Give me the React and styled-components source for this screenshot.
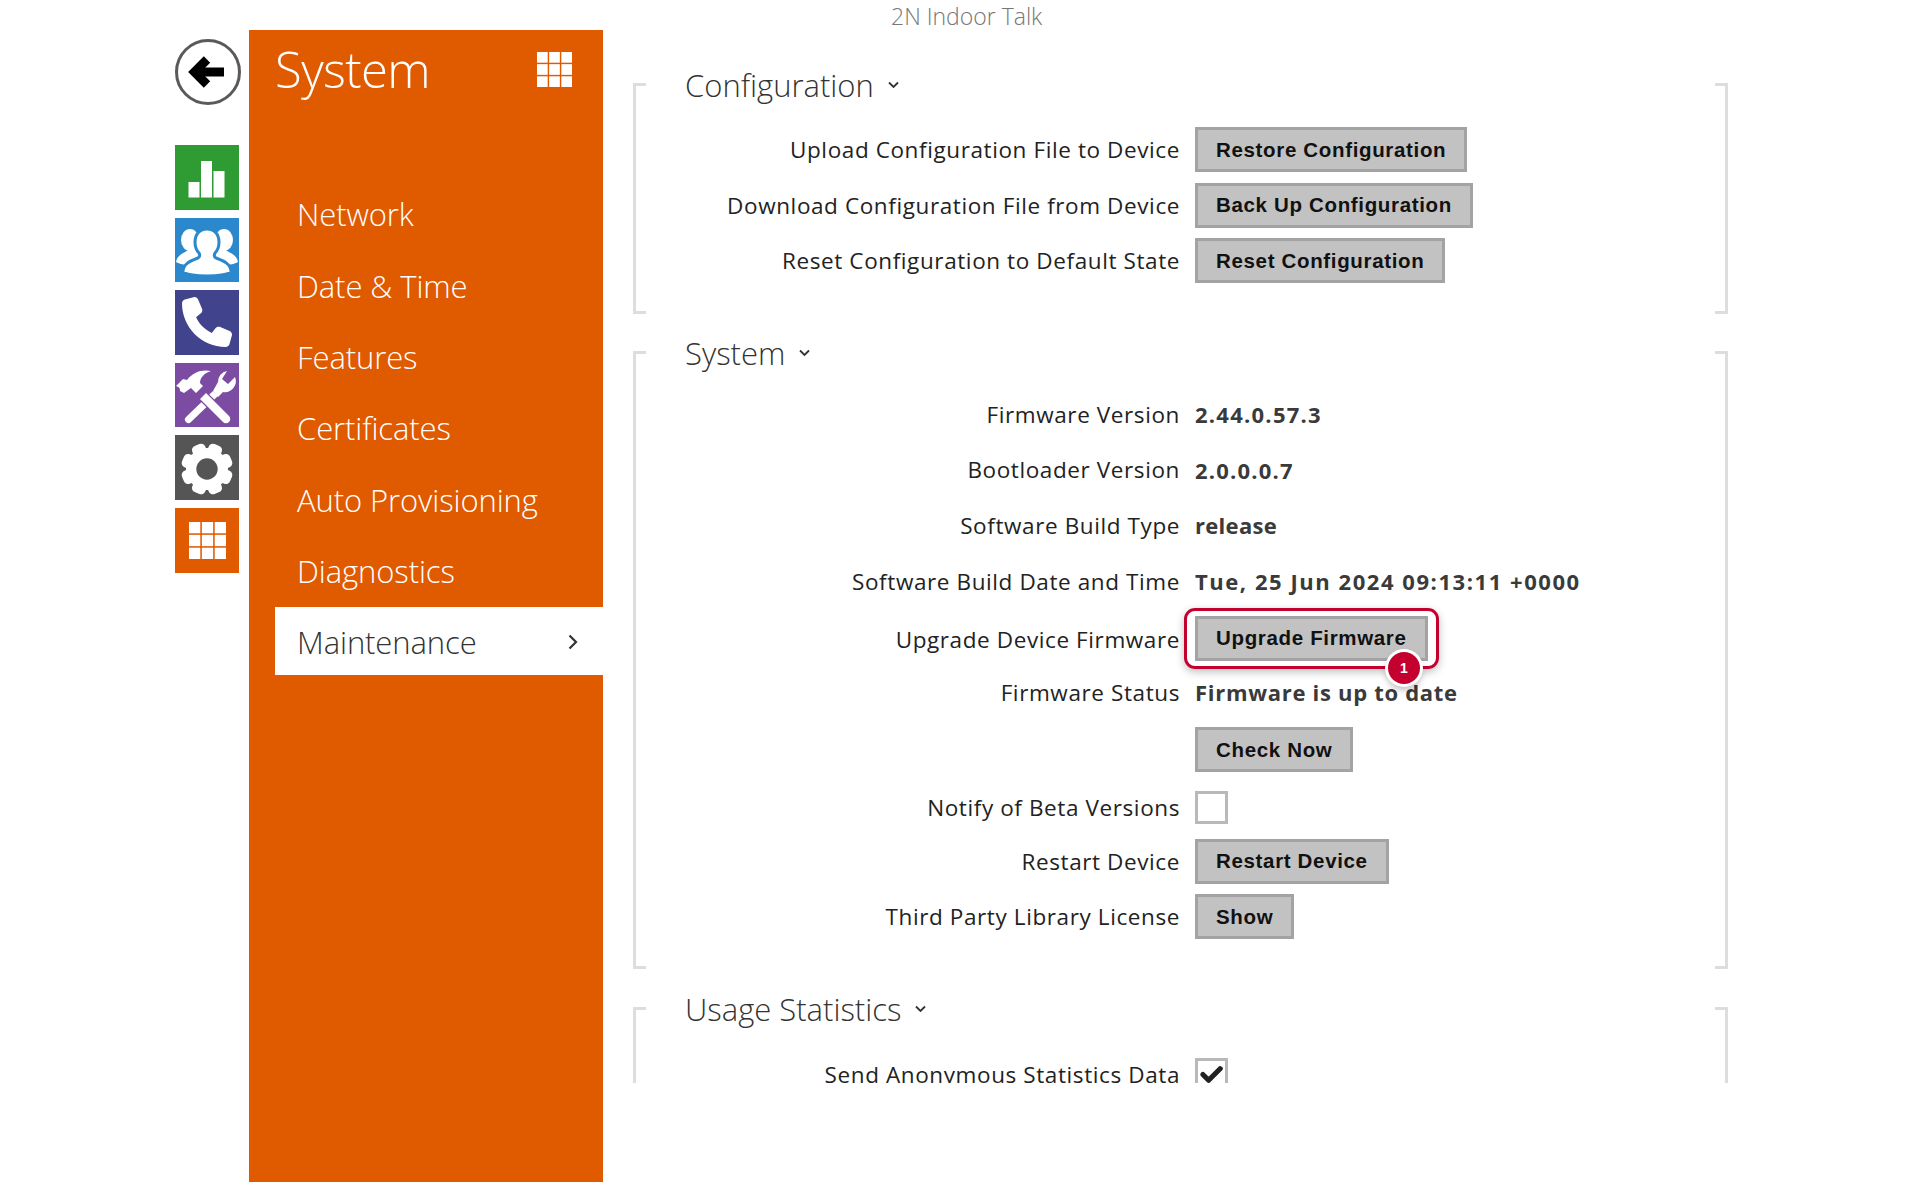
import React from 'react';
import styled, { createGlobalStyle } from 'styled-components';
import { FaPhone, FaCheck } from 'react-icons/fa6';

const GlobalStyle = createGlobalStyle`
  html, body {
    margin: 0;
    padding: 0;
    background: #ffffff;
    font-family: "Open Sans", "Liberation Sans", sans-serif;
  }
`

const Page = styled.div`
  display: flex;
  align-items: flex-start;
  width: 1920px;
  height: 1200px;
  padding-left: 175px;
  box-sizing: border-box;
  overflow: hidden;
`
const Rail = styled.div`
  display: flex;
  flex-direction: column;
  width: 74px;
  flex: none;
  padding-top: 39px;
`
const BackButton = styled.div`
  width: 66px;
  height: 66px;
  box-sizing: border-box;
  border: 3px solid #5a5a5a;
  border-radius: 50%;
  margin-bottom: 40px;
  display: flex;
  align-items: center;
  justify-content: center;
`
const TileList = styled.div`
  display: flex;
  flex-direction: column;
  gap: 8px;
`
const Tile = styled.div`
  width: 64px;
  height: 64.6px;
  background-color: ${props => props.$color};
  display: flex;
  align-items: center;
  justify-content: center;
  color: #ffffff;
`
const Panel = styled.div`
  width: 354px;
  height: 1152px;
  margin-top: 30px;
  flex: none;
  background-color: #e05a00;
  color: #ffffff;
`
const PanelHeader = styled.div`
  display: flex;
  align-items: center;
  justify-content: space-between;
  height: 79px;
  padding: 0 31px 0 26px;
  margin-bottom: 70.4px;
`
const PanelTitle = styled.div`
  font-size: 49px;
  font-weight: 300;
  letter-spacing: -0.6px;
  line-height: 79px;
`
const NavList = styled.div`
  display: flex;
  flex-direction: column;
  gap: 3.3px;
  margin-left: 26px;
`
const NavItem = styled.div`
  display: flex;
  align-items: center;
  justify-content: space-between;
  height: 68px;
  box-sizing: border-box;
  padding: 2px 25px 0 22px;
  font-size: 31px;
  font-weight: 300;
  letter-spacing: -0.1px;
  background-color: ${props => (props.$active ? '#ffffff' : 'transparent')};
  color: ${props => (props.$active ? '#333333' : '#ffffff')};
`
const Main = styled.div`
  flex: none;
  width: 1125px;
  padding-left: 30px;
  box-sizing: border-box;
`
const DeviceName = styled.div`
  height: 34px;
  line-height: 32px;
  padding-left: 258px;
  font-size: 23px;
  font-weight: 300;
  color: #777777;
`
const ScrollArea = styled.div`
  height: 1049px;
  overflow: hidden;
  padding-top: 29px;
  box-sizing: border-box;
`
const Section = styled.section`
  position: relative;
  display: flow-root;
  width: 1095px;
  height: ${props => props.$height}px;
  margin-bottom: ${props => props.$gap}px;
  padding-left: 52px;
  box-sizing: border-box;

  &::before, &::after {
    content: "";
    position: absolute;
    top: 20px;
    bottom: 0;
    width: 10px;
    border: 3px solid #dddddd;
  }
  &::before {
    left: 0;
    border-right: none;
  }
  &::after {
    right: 0;
    border-left: none;
  }
`
const SectionHeading = styled.h2`
  display: flex;
  align-items: center;
  gap: 14px;
  height: 46px;
  margin: -1px 0 ${props => props.$below + 1}px 0;
  font-size: 31px;
  font-weight: 300;
  color: #333333;
`
const Rows = styled.div`
  display: flex;
  flex-direction: column;
  gap: 10.7px;
  margin-left: -52px;
`
const Row = styled.div`
  display: grid;
  grid-template-columns: 547px 1fr;
  column-gap: 15px;
  align-items: center;
  height: 45px;
  box-sizing: border-box;
  padding-bottom: ${props => props.$up || 0}px;
  padding-top: ${props => props.$down || 0}px;
`
const Label = styled.div`
  text-align: right;
  font-size: 22.5px;
  letter-spacing: 0.6px;
  color: #222222;
  padding-top: ${props => props.$down || 0}px;
`
const Value = styled.div`
  font-size: 22px;
  font-weight: 700;
  letter-spacing: ${props => props.$spacing}px;
  color: #3a3a3a;
`
const Button = styled.button`
  display: block;
  justify-self: start;
  height: 45px;
  padding: 0 18px;
  box-sizing: border-box;
  border: 3px solid #a3a3a3;
  border-radius: 0;
  background-color: #c2c2c2;
  font-family: "Liberation Sans", Arial, sans-serif;
  font-size: 20.5px;
  font-weight: 700;
  letter-spacing: 0.66px;
  color: #111111;
`
const Callout = styled.div`
  position: relative;
  width: max-content;

  &::after {
    content: "";
    position: absolute;
    top: -8px;
    bottom: -8px;
    left: -11px;
    right: -11px;
    border: 3px solid #c4002f;
    border-radius: 11px;
    box-shadow: 0 3px 8px rgba(0,0,0,.25);
    pointer-events: none;
  }
`
const Badge = styled.div`
  position: absolute;
  z-index: 1;
  left: 193px;
  top: 36px;
  width: 32px;
  height: 32px;
  border-radius: 50%;
  background-color: #c4002f;
  box-shadow: 0 0 0 3px #ffffff, 0 4px 6px 2px rgba(0,0,0,.25);
  color: #ffffff;
  font-family: "Liberation Sans", Arial, sans-serif;
  font-size: 14px;
  font-weight: 700;
  line-height: 32px;
  text-align: center;
`
const CheckBox = styled.div`
  width: 33px;
  height: 33px;
  box-sizing: border-box;
  border: 3px solid #b9b9b9;
  background: #ffffff;
  display: flex;
  align-items: center;
  justify-content: center;
  color: #222222;
  font-size: 23px;
`

const ChevronDown = () => (
  <svg width="11" height="8" viewBox="0 0 11 8" fill="none" stroke="#333333" strokeWidth="1.8">
    <path d="M1 1.5l4.5 4.5 4.5-4.5" />
  </svg>
)
const ChevronRight = () => (
  <svg width="10" height="16" viewBox="0 0 10 16" fill="none" stroke="#333333" strokeWidth="2.2">
    <path d="M1.5 1.5l6.5 6.5-6.5 6.5" />
  </svg>
)
const BackArrow = () => (
  <svg width="60" height="60" viewBox="3 3 60 60" fill="none" stroke="#000000" strokeWidth="9">
    <path d="M32 20.5L19.5 33 32 45.5" />
    <path d="M22 33h27" />
  </svg>
)
const GridIcon = ({ size }) => (
  <svg width={size} height={size} viewBox="0 0 36 36" fill="#ffffff">
    {[0, 12.5, 25].map(y => [0, 12.5, 25].map(x => (
      <rect key={`${x}-${y}`} x={x} y={y} width="11" height="11" />
    )))}
  </svg>
)
const BarsIcon = () => (
  <svg width="64" height="64" viewBox="0 0 64 64" fill="#ffffff">
    <rect x="13.5" y="37" width="11" height="15.5" />
    <rect x="26" y="16" width="11" height="36.5" />
    <rect x="38.5" y="26" width="11" height="26.5" />
  </svg>
)
const UsersIcon = () => (
  <svg width="64" height="64" viewBox="0 0 64 64" fill="#ffffff" stroke="#2b88cc" strokeWidth="3">
    <ellipse cx="15" cy="22" rx="9" ry="11" stroke="none" />
    <ellipse cx="49" cy="22" rx="9" ry="11" stroke="none" />
    <path d="M1 44c1-7 8-9 14-13h34c6 4 13 6 14 13-5 3-15 4-31 4S6 47 1 44z" stroke="none" />
    <path d="M8 54c0-8 7-11 15-14 2-1 2-3 1-5-3-3-4-7-4-11 0-8 5-13 12-13s12 5 12 13c0 4-1 8-4 11-1 2-1 4 1 5 8 3 15 6 15 14-5 3-14 4-24 4S13 57 8 54z" />
  </svg>
)
const ToolsIcon = () => (
  <svg width="64" height="64" viewBox="0 0 64 64" fill="#ffffff">
    <path d="M11 54l27-26 5 5-27 26a3.5 3.5 0 0 1-5-5z" />
    <path d="M38 28l5-9a11 11 0 0 1 9-11l-5 8 6 5 7-7a11 11 0 0 1-12 15l-5 5z" />
    <path d="M25 36l6-6 23 23a4 4 0 0 1-6 6z" stroke="#7b4ca2" strokeWidth="2.5" paintOrder="stroke" />
    <path d="M1 23l7-7 4 1C18 9 27 6 36 8c-7 2-11 7-11 12l3 3-7 7-5-5-7 5-4-2c0-2 0-4-4-5z" />
  </svg>
)
const GearIcon = () => (
  <svg width="64" height="64" viewBox="0 0 64 64">
    {[0, 45, 90, 135, 180, 225, 270, 315].map(a => (
      <rect key={a} x="25" y="7" width="14" height="14" rx="4.5" fill="#ffffff" transform={`rotate(${a + 22.5} 32 33)`} />
    ))}
    <circle cx="32" cy="33" r="21" fill="#ffffff" />
    <circle cx="32" cy="33" r="10.7" fill="#555555" />
  </svg>
)

const navItems = ['Network', 'Date & Time', 'Features', 'Certificates', 'Auto Provisioning', 'Diagnostics', 'Maintenance']

const App = () => (
  <Page>
    <GlobalStyle />
    <Rail>
      <BackButton><BackArrow /></BackButton>
      <TileList>
        <Tile $color="#2f9b33"><BarsIcon /></Tile>
        <Tile $color="#2b88cc"><UsersIcon /></Tile>
        <Tile $color="#41438c"><FaPhone size={50} /></Tile>
        <Tile $color="#7b4ca2"><ToolsIcon /></Tile>
        <Tile $color="#555555"><GearIcon /></Tile>
        <Tile $color="#e05a00"><GridIcon size={37} /></Tile>
      </TileList>
    </Rail>
    <Panel>
      <PanelHeader>
        <PanelTitle>System</PanelTitle>
        <GridIcon size={35} />
      </PanelHeader>
      <NavList>
        {navItems.map(item => (
          <NavItem key={item} $active={item === 'Maintenance'}>
            {item}
            {item === 'Maintenance' && <ChevronRight />}
          </NavItem>
        ))}
      </NavList>
    </Panel>
    <Main>
      <DeviceName>2N Indoor Talk</DeviceName>
      <ScrollArea>
        <Section $height={251} $gap={17}>
          <SectionHeading $below={18}>Configuration <ChevronDown /></SectionHeading>
          <Rows>
            <Row><Label>Upload Configuration File to Device</Label><Button>Restore Configuration</Button></Row>
            <Row><Label>Download Configuration File from Device</Label><Button>Back Up Configuration</Button></Row>
            <Row><Label>Reset Configuration to Default State</Label><Button>Reset Configuration</Button></Row>
          </Rows>
        </Section>
        <Section $height={638} $gap={18}>
          <SectionHeading $below={16}>System <ChevronDown /></SectionHeading>
          <Rows>
            <Row $up={3}><Label>Firmware Version</Label><Value $spacing={1.25}>2.44.0.57.3</Value></Row>
            <Row $up={3}><Label>Bootloader Version</Label><Value $spacing={1.2}>2.0.0.0.7</Value></Row>
            <Row $up={3}><Label>Software Build Type</Label><Value $spacing={0.3}>release</Value></Row>
            <Row $up={3}><Label>Software Build Date and Time</Label><Value $spacing={1.55}>Tue, 25 Jun 2024 09:13:11 +0000</Value></Row>
            <Row>
              <Label $down={2}>Upgrade Device Firmware</Label>
              <Callout>
                <Button>Upgrade Firmware</Button>
                <Badge>1</Badge>
              </Callout>
            </Row>
            <Row $up={3}><Label>Firmware Status</Label><Value $spacing={0.7}>Firmware is up to date</Value></Row>
            <Row><span /><Button>Check Now</Button></Row>
            <Row $down={5}><Label>Notify of Beta Versions</Label><CheckBox /></Row>
            <Row><Label>Restart Device</Label><Button>Restart Device</Button></Row>
            <Row><Label>Third Party Library License</Label><Button>Show</Button></Row>
          </Rows>
        </Section>
        <Section $height={200} $gap={0}>
          <SectionHeading $below={19}>Usage Statistics <ChevronDown /></SectionHeading>
          <Rows>
            <Row><Label>Send Anonymous Statistics Data</Label><CheckBox><FaCheck stroke="currentColor" strokeWidth={50} /></CheckBox></Row>
          </Rows>
        </Section>
      </ScrollArea>
    </Main>
  </Page>
);

export default App;
